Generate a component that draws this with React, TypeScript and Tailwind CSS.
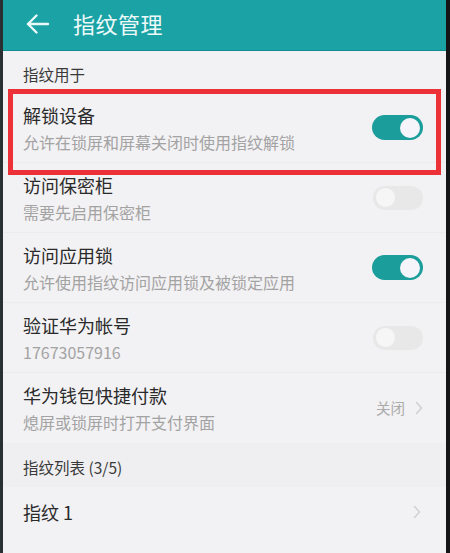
import React from "react";

const font = { fontFamily: '"Noto Sans CJK SC", "Noto Sans", sans-serif' };

function Toggle({ on }: { on: boolean }) {
  return on ? (
    <div className="w-[51px] h-[25px] rounded-full bg-[#1a9d9b] flex items-center justify-end pr-[3px]">
      <div className="w-[20px] h-[20px] rounded-full bg-[#f4f4fa]" />
    </div>
  ) : (
    <div className="w-[50px] h-[24px] rounded-full bg-[#e8e8e8] flex items-center justify-start pl-[3px]">
      <div className="w-[19px] h-[19px] rounded-full bg-[#f6f6f6]" />
    </div>
  );
}

function Chevron() {
  return (
    <svg width="8" height="14" viewBox="0 0 8 14" fill="none">
      <path d="M1.5 1.5 L6.5 7 L1.5 12.5" stroke="#cfcfcf" strokeWidth="1.4" strokeLinecap="round" strokeLinejoin="round" />
    </svg>
  );
}

function Row({ title, sub, right, divider = true }: { title: string; sub?: string; right?: React.ReactNode; divider?: boolean }) {
  return (
    <div className={`h-[70px] flex items-center pl-[20px] pr-[23px] ${divider ? "border-b border-[#ececee]" : ""}`}>
      <div className="flex-1 flex flex-col">
        <div className="text-[18px] leading-[24px] text-[#2a2a2a]">{title}</div>
        {sub && <div className="text-[16px] leading-[22px] text-[#a3a3a3] mt-[4px]">{sub}</div>}
      </div>
      {right}
    </div>
  );
}

export default function App() {
  return (
    <div className="w-[450px] h-[553px] flex bg-[#1b1b1d] overflow-hidden" style={font}>
      <div className="w-[3px] bg-[#2a2f33]" />
      <div className="flex-1 flex flex-col bg-[#f2f1f3] relative">
        <div className="h-[51px] bg-[#1aa2a5] flex items-center border-b border-[#128c8f]">
          <div className="pl-[23px] w-[70px] pb-[2px]">
            <svg width="24" height="20" viewBox="0 0 24 20" fill="none">
              <path d="M2 10 H22" stroke="#e9f8f8" strokeWidth="2.4" strokeLinecap="round" />
              <path d="M10.5 1.5 L2 10 L10.5 18.5" stroke="#e9f8f8" strokeWidth="2.4" strokeLinecap="round" strokeLinejoin="round" />
            </svg>
          </div>
          <div className="text-[22px] text-[#eefafa] tracking-[0.5px] pb-[3px]">指纹管理</div>
        </div>
        <div className="h-[42px] pl-[20px] flex items-center pt-[6px] text-[15.5px] text-[#3a3a3a]">指纹用于</div>
        <Row title="解锁设备" sub="允许在锁屏和屏幕关闭时使用指纹解锁" right={<Toggle on />} />
        <Row title="访问保密柜" sub="需要先启用保密柜" right={<Toggle on={false} />} />
        <Row title="访问应用锁" sub="允许使用指纹访问应用锁及被锁定应用" right={<Toggle on />} />
        <Row title="验证华为帐号" sub="17673057916" right={<Toggle on={false} />} />
        <Row
          title="华为钱包快捷付款"
          sub="熄屏或锁屏时打开支付界面"
          divider={false}
          right={
            <div className="flex items-center gap-[10px] text-[14.5px] text-[#ababab]">
              <span>关闭</span>
              <Chevron />
            </div>
          }
        />
        <div className="h-[44px] pl-[20px] flex items-center pt-[6px] text-[15.5px] text-[#3a3a3a] bg-[#efeff1]">指纹列表 (3/5)</div>
        <div className="h-[50px] flex items-center pl-[20px] pr-[25px]">
          <div className="flex-1 text-[18px] text-[#2a2a2a]">指纹 1</div>
          <Chevron />
        </div>
        <div className="absolute left-[5px] top-[89px] w-[433px] h-[86px] border-[5px] border-[#ec3238]" />
      </div>
      <div className="w-[4px] bg-[#151517]" />
    </div>
  );
}
